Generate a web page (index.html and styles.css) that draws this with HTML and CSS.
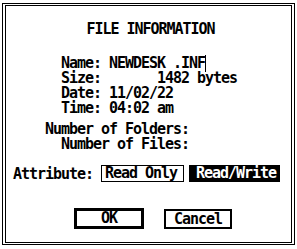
FILE: index.html
```html
<!DOCTYPE html>
<html>

<head>
  <title>File Information</title>
  <meta charset="UTF-8">
  <link rel="stylesheet" href="styles.css">
</head>

<body>
  <div class="frame">
    <div class="dialog">
      <div class="title">FILE INFORMATION</div>

      <div class="fields">
        <div class="row first">Name: NEWDESK .INF<span class="cursor"></span></div>
        <div class="row">Size:       1482 bytes</div>
        <div class="row">Date: 11/02/22</div>
        <div class="row">Time: 04:02 am</div>
      </div>

      <div class="counts">
        <div class="row">Number of Folders:</div>
        <div class="row">  Number of Files:</div>
      </div>

      <div class="attribute">
        <span class="label">Attribute:</span>
        <span class="choice">Read Only</span>
        <span class="choice selected">Read/Write</span>
      </div>

      <div class="buttons">
        <span class="button default">OK</span>
        <span class="button">Cancel</span>
      </div>
    </div>
  </div>
</body>

</html>
```

FILE: styles.css
```css
body {
  margin: 0;
  padding: 0;
  background-color: #fff;
  color: #000;
  font-family: "DejaVu Sans Mono", monospace;
  font-weight: bold;
  font-size: 15px;
  letter-spacing: -1.03px;
}

.frame {
  box-sizing: border-box;
  width: 293px;
  height: 242px;
  margin: 3px 0 0 2px;
  padding: 1px 2px;
  border: 1px solid #000;
}

.dialog {
  height: 100%;
  box-sizing: border-box;
  border: 1px solid #000;
}

.row,
.title {
  white-space: pre;
  line-height: 15px;
  height: 15px;
}

.title {
  margin-top: 15px;
  padding-left: 4px;
  text-align: center;
  line-height: 16px;
  height: 16px;
}

.fields {
  margin-top: 18px;
  padding-left: 55px;
}

.row.first {
  height: 16px;
}

.cursor {
  display: inline-block;
  width: 1px;
  height: 17px;
  background-color: #000;
  vertical-align: -4px;
}

.counts {
  margin-top: 6px;
  padding-left: 39px;
}

.attribute {
  display: flex;
  align-items: center;
  margin-top: 13px;
  padding-left: 7px;
  height: 17px;
}

.label {
  white-space: pre;
  margin-right: 8px;
}

.choice {
  box-sizing: border-box;
  height: 17px;
  line-height: 15px;
  width: 83px;
  padding-left: 3px;
  border: 1px solid #000;
}

.choice.selected {
  width: 91px;
  margin-left: 5px;
  padding-left: 6px;
  background-color: #000;
  color: #fff;
}

.buttons {
  display: flex;
  align-items: flex-start;
  margin-top: 26px;
  padding-left: 68px;
}

.button {
  box-sizing: border-box;
  width: 68px;
  height: 20px;
  margin-top: 1px;
  margin-left: 20px;
  line-height: 16px;
  border: 2px solid #000;
  text-align: center;
}

.button.default {
  width: 70px;
  height: 21px;
  margin-top: 0;
  margin-left: 0;
  line-height: 15px;
  border-width: 3px;
}
```
